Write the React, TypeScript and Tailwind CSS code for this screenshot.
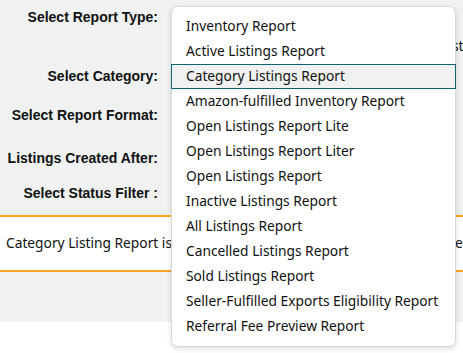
const reportTypes = [
  "Inventory Report",
  "Active Listings Report",
  "Category Listings Report",
  "Amazon-fulfilled Inventory Report",
  "Open Listings Report Lite",
  "Open Listings Report Liter",
  "Open Listings Report",
  "Inactive Listings Report",
  "All Listings Report",
  "Cancelled Listings Report",
  "Sold Listings Report",
  "Seller-Fulfilled Exports Eligibility Report",
  "Referral Fee Preview Report",
];

export default function App() {
  const selected = "Category Listings Report";

  return (
    <div
      className="relative w-[463px] h-[353px] bg-white overflow-hidden text-[13.75px] text-[#0f1111]"
      style={{ fontFamily: '"Noto Sans", Arial, sans-serif' }}
    >
      <div className="bg-[#f0f2f2] h-[322px]">
        {/* form labels */}
        <div
          className="flex flex-col w-[158px] items-end font-bold leading-[20px] text-[14px]"
          style={{ fontFamily: '"Liberation Sans", Arial, sans-serif' }}
        >
          <div className="h-[66px] pt-[7px]">Select Report Type:</div>
          <div className="h-[39px]">Select Category:</div>
          <div className="h-[43px]">Select Report Format:</div>
          <div className="h-[35px]">Listings Created After:</div>
          <div className="h-[30px]">Select Status Filter :</div>
        </div>
        <div className="absolute left-[452px] top-[36px]">st</div>

        <div className="absolute left-0 right-0 top-[215px] h-[57px] bg-white border-y-2 border-[#ffa41c] flex items-center pl-[6px]">
          <span className="flex-1">Category Listing Report is</span>
          <span className="absolute left-[455px]">e</span>
        </div>
      </div>

      {/* report type dropdown */}
      <div className="absolute left-[171px] top-[6px] w-[285px] bg-white border border-[#d5d9d9] rounded-[7px] shadow-[0_2px_5px_rgba(15,17,17,0.15)] pt-[7px] pb-[7px]">
        <ul>
          {reportTypes.map((t) => (
            <li
              key={t}
              className={
                t === selected
                  ? "h-[25px] flex items-center pl-[14px] bg-[#f0f2f2] border border-[#0e6271] -mx-px"
                  : "h-[25px] flex items-center pl-[14px] border border-transparent -mx-px"
              }
            >
              {t}
            </li>
          ))}
        </ul>
      </div>
    </div>
  );
}
